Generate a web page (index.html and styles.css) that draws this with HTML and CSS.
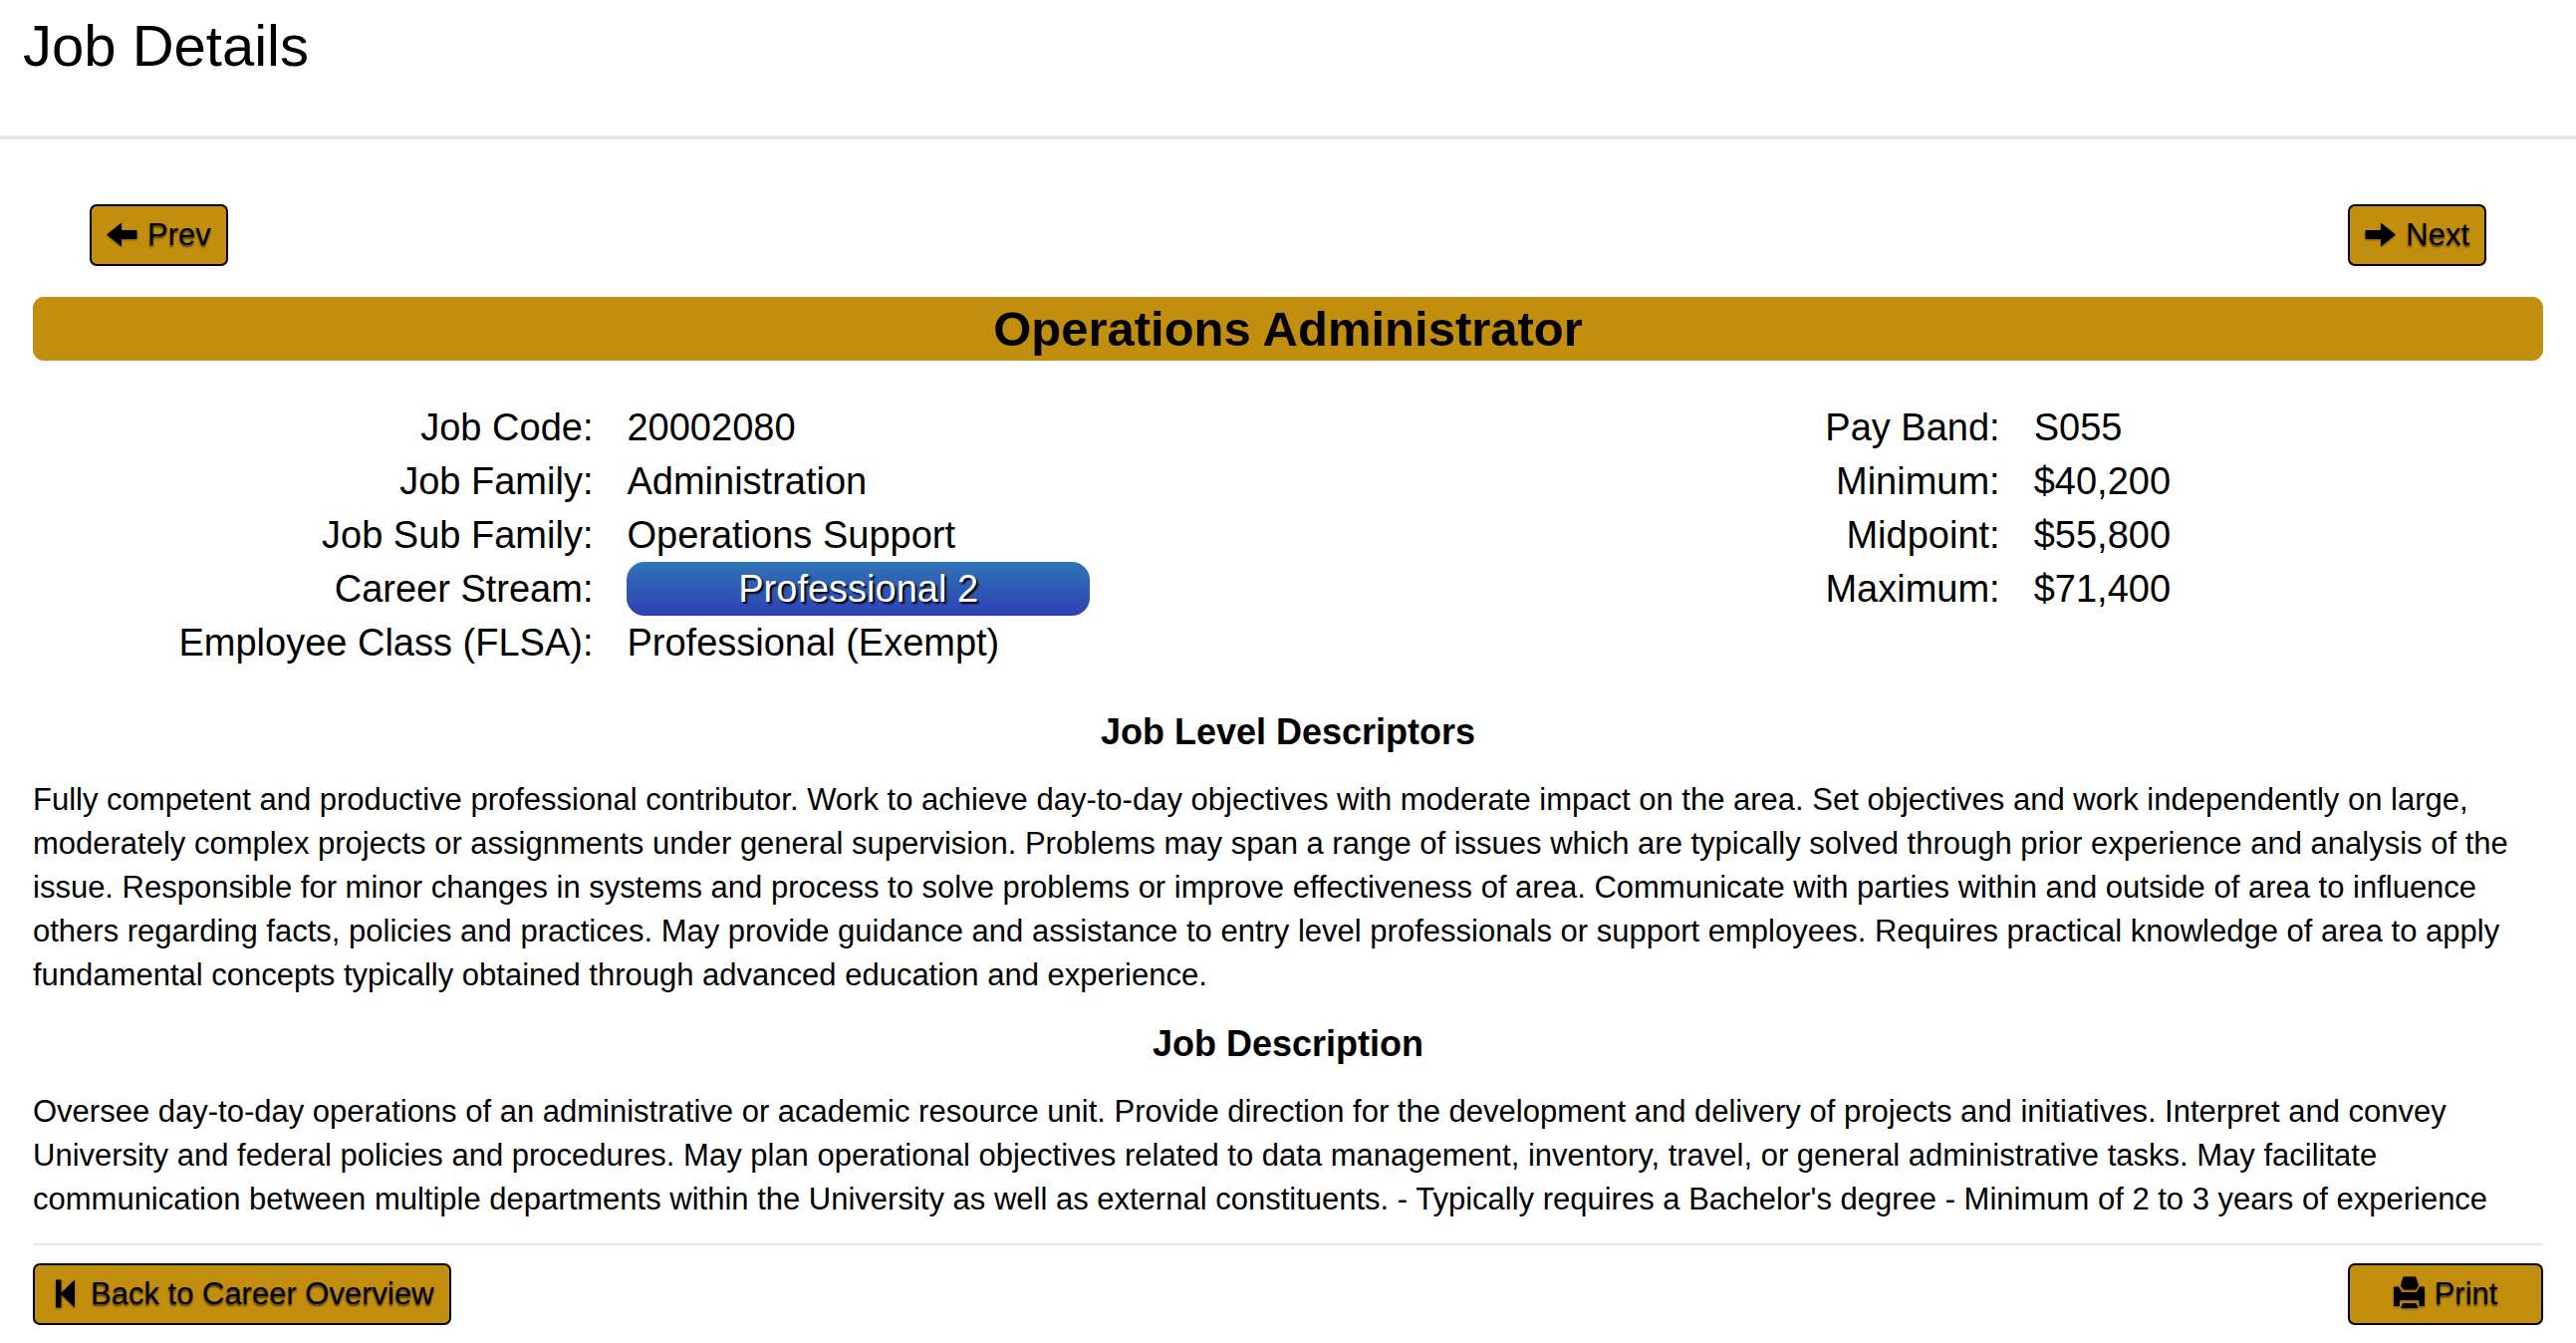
FILE: index.html
```html
<!DOCTYPE html>
<html lang="en">
<head>
<meta charset="utf-8">
<meta name="viewport" content="width=device-width, initial-scale=1">
<title>Job Details</title>
<link rel="stylesheet" href="styles.css">
</head>
<body>
<header class="page-header">
  <h1 class="page-title">Job Details</h1>
</header>
<main class="content">
  <nav class="pager" aria-label="Jobs">
    <button class="btn" type="button">
      <svg class="icon" viewBox="0 0 31 31" aria-hidden="true"><path d="M0 14.5 15 2.500V10H29.500Q30.500 10 30.500 11V18Q30.500 19 29.500 19H15V26.500Z"/></svg>
      <span>Prev</span>
    </button>
    <button class="btn" type="button">
      <svg class="icon" viewBox="0 0 31 31" aria-hidden="true"><path d="M31 14.500 16 2.500V10H1.500Q.5 10 .5 11V18Q.5 19 1.500 19H16V26.500Z"/></svg>
      <span>Next</span>
    </button>
  </nav>

  <h2 class="job-title">Operations Administrator</h2>

  <div class="facts">
    <dl class="fact-list fact-list-job">
      <dt>Job Code:</dt><dd>20002080</dd>
      <dt>Job Family:</dt><dd>Administration</dd>
      <dt>Job Sub Family:</dt><dd>Operations Support</dd>
      <dt>Career Stream:</dt><dd><span class="stream">Professional 2</span></dd>
      <dt>Employee Class (FLSA):</dt><dd>Professional (Exempt)</dd>
    </dl>
    <dl class="fact-list fact-list-pay">
      <dt>Pay Band:</dt><dd>S055</dd>
      <dt>Minimum:</dt><dd>$40,200</dd>
      <dt>Midpoint:</dt><dd>$55,800</dd>
      <dt>Maximum:</dt><dd>$71,400</dd>
    </dl>
  </div>

  <section class="section">
    <h3 class="section-title">Job Level Descriptors</h3>
    <p class="section-text">Fully competent and productive professional contributor. Work to achieve day-to-day objectives with moderate impact on the area. Set objectives and work independently on large, moderately complex projects or assignments under general supervision. Problems may span a range of issues which are typically solved through prior experience and analysis of the issue. Responsible for minor changes in systems and process to solve problems or improve effectiveness of area. Communicate with parties within and outside of area to influence others regarding facts, policies and practices. May provide guidance and assistance to entry level professionals or support employees. Requires practical knowledge of area to apply fundamental concepts typically obtained through advanced education and experience.</p>
  </section>

  <section class="section">
    <h3 class="section-title">Job Description</h3>
    <p class="section-text">Oversee day-to-day operations of an administrative or academic resource unit. Provide direction for the development and delivery of projects and initiatives. Interpret and convey University and federal policies and procedures. May plan operational objectives related to data management, inventory, travel, or general administrative tasks. May facilitate communication between multiple departments within the University as well as external constituents. - Typically requires a Bachelor's degree - Minimum of 2 to 3 years of experience</p>
  </section>

  <footer class="actions">
    <button class="btn" type="button">
      <svg class="icon" viewBox="0 0 31 31" aria-hidden="true"><path d="M6 .5H11.500V13.500L25 .5V28.500L11.500 15.500V28.500H6Z"/></svg>
      <span>Back to Career Overview</span>
    </button>
    <button class="btn btn-wide" type="button">
      <svg class="icon" viewBox="0 0 31 31" aria-hidden="true"><path d="M9.500-2.500H22L24.700 5V7L22 10.500H10L7.300 7V5ZM1 7.500H5L8 13H23L26 7.500H30Q31 7.500 31 8.500V27H25.500V21H6V27H0V8.500Q0 7.500 1 7.500ZM9 24H22.500L24.700 29H7.300Z"/></svg>
      <span>Print</span>
    </button>
  </footer>
</main>
</body>
</html>
```
FILE: styles.css
```css
:root {
  --gold: #c28e0e;
  --rule: #e5e5e5;
}

* {
  box-sizing: border-box;
}

body {
  margin: 0;
  background: #fff;
  color: #000;
  font-family: "Liberation Sans", Arial, sans-serif;
  font-size: 31px;
  line-height: 44px;
}

h1, h2, h3, p, dl, dd {
  margin: 0;
}

.page-header {
  padding: 14px 23px 58px;
  border-bottom: 4px solid var(--rule);
}

.page-title {
  font-size: 58px;
  font-weight: 400;
  line-height: 64px;
}

.content {
  padding: 65px 33px 18px;
}

.pager {
  display: flex;
  justify-content: space-between;
  padding: 0 57px;
}

.btn {
  display: inline-flex;
  align-items: center;
  justify-content: center;
  gap: 10px;
  padding: 7px 15px;
  border: 2px solid #000;
  border-radius: 7px;
  background: var(--gold);
  color: #000;
  font: inherit;
  text-shadow: 0 2px 2px rgba(0, 0, 0, 0.6);
  cursor: pointer;
}

.btn-wide {
  min-width: 196px;
}

.icon {
  width: 31px;
  height: 31px;
  overflow: visible;
  fill: currentColor;
  filter: drop-shadow(0 1px 1px rgba(0, 0, 0, 0.4));
}

.job-title {
  margin-top: 31px;
  border-radius: 11px;
  background: var(--gold);
  font-size: 49px;
  line-height: 64px;
  text-align: center;
}

.facts {
  display: grid;
  grid-template-columns: 56% 44%;
  align-items: start;
  margin-top: 40px;
  font-size: 38px;
  line-height: 54px;
}

.fact-list {
  display: grid;
  column-gap: 32px;
}

.fact-list-job {
  grid-template-columns: 40% 1fr;
}

.fact-list-pay {
  grid-template-columns: 51% 1fr;
}

.fact-list dt {
  padding-right: 2px;
  text-align: right;
}

.stream {
  display: block;
  width: 57%;
  border-radius: 18px;
  background: linear-gradient(#2f74b5, #2f40b5);
  color: #fff;
  text-align: center;
  text-shadow: 2px 2px 2px #000;
}

.section {
  margin-top: 27px;
}

.facts + .section {
  margin-top: 43px;
}

.section-title {
  margin-bottom: 26px;
  font-size: 36px;
  line-height: 40px;
  text-align: center;
}

.actions {
  display: flex;
  justify-content: space-between;
  margin-top: 22px;
  padding-top: 18px;
  border-top: 2px solid var(--rule);
}
```
